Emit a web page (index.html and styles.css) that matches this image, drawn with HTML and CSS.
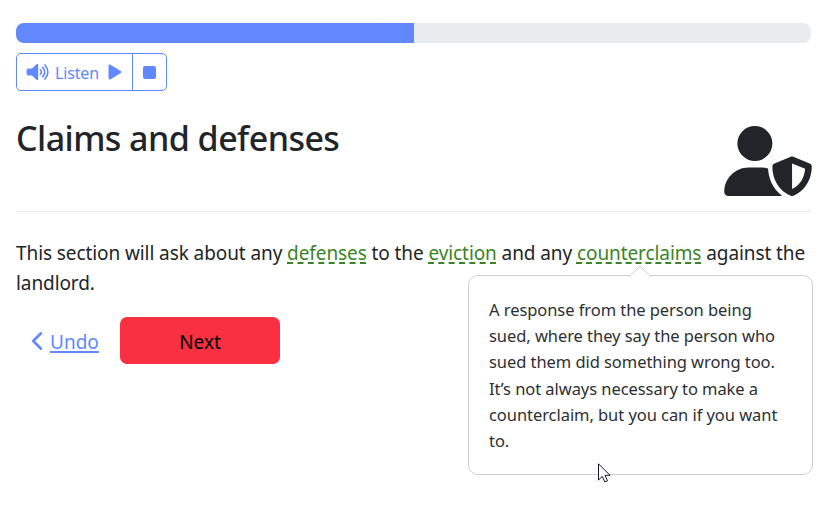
FILE: index.html
```html
<!DOCTYPE html>
<html lang="en">
<head>
<meta charset="utf-8">
<title>Claims and defenses</title>
<link rel="stylesheet" href="styles.css">
</head>
<body>
<main class="page">
  <div class="progress"><div class="progress-bar" style="width:50%"></div></div>
  <div class="audio">
    <button class="listen">
      <svg class="volume" viewBox="0 0 24 18"><path fill="currentColor" d="M12.200 2v14c0 1-1 1.300-1.700.7L6 12.600H2.600A2 2 0 0 1 .6 10.600V7.400a2 2 0 0 1 2-2H6L10.500 1.300c.7-.6 1.700-.3 1.700.7z"/><path fill="none" stroke="currentColor" stroke-width="1.600" stroke-linecap="round" d="M14.300 6.800q2.200 2.200 0 4.400M16.600 4.400q4.200 4.600 0 9.200M18.900 2q6 7 0 14"/></svg>
      <span class="listen-label">Listen</span>
      <svg class="play" viewBox="0 0 14 16"><path fill="currentColor" d="M.5 2v12c0 1.300 1.100 1.900 2.200 1.200l10-6.200c1-.6 1-1.500 0-2.100l-10-6C1.600.2.5.8.5 2z"/></svg>
    </button>
    <button class="stop" aria-label="Stop"><span class="square"></span></button>
  </div>
  <header class="heading">
    <h1>Claims and defenses</h1>
    <svg class="shield" viewBox="0 0 640 512"><path fill="currentColor" d="M224 256A128 128 0 1 0 224 0a128 128 0 1 0 0 256zm-45.700 48C79.800 304 0 383.800 0 482.300C0 498.700 13.300 512 29.700 512H418.300c1.800 0 3.500-.2 5.300-.5c-76.300-55.100-99.800-141-103.100-200.200c-16.100-4.800-33.100-7.300-50.700-7.300H178.300zm308.800-78.300l-120 48C358 277.400 352 286.200 352 296c0 63.300 25.900 168.800 134.800 214.200c5.900 2.500 12.600 2.500 18.500 0C614.100 464.800 640 359.300 640 296c0-9.800-6-18.600-15.100-22.300l-120-48c-5.700-2.300-12.100-2.300-17.800 0zM591.400 312c-3.900 50.700-27.200 116.700-95.400 149.700V273.800L591.400 312z"/></svg>
  </header>
  <p class="question">This section will ask about any <a class="term">defenses</a> to the <a class="term">eviction</a> and any <a class="term">counterclaims</a> against the landlord.</p>
  <div class="actions">
    <a class="undo"><svg class="chevron" viewBox="0 0 12 20"><path fill="none" stroke="currentColor" stroke-width="2.600" stroke-linecap="round" stroke-linejoin="round" d="M10 2.300L2.200 10L10 17.700"/></svg><span class="undo-label">Undo</span></a>
    <button class="next">Next</button>
  </div>
</main>
<div class="popover" role="tooltip">A response from the person being sued, where they say the person who sued them did something wrong too. It’s not always necessary to make a counterclaim, but you can if you want to.<svg class="arrow" viewBox="0 0 22 12"><path fill="#fff" d="M0 12L11 1L22 12z"/><path fill="none" stroke="#d0d0d0" d="M.5 11.500L11 1L21.500 11.500"/></svg></div>
<svg class="cursor" viewBox="0 0 13 20"><path fill="#fff" stroke="#15152a" d="M.5.8V17L4.300 13.400L6.800 19L9.500 17.800L7 12.300H12z"/></svg>
</body>
</html>
```
FILE: styles.css
```css
* { box-sizing: border-box; }
body { position: relative; margin: 0; min-height: 519px; background: #fff; color: #212529; font-family: "Noto Sans", "Open Sans", sans-serif; }
button { font-family: inherit; margin: 0; }
.page { width: 811px; padding: 23px 0 0 16px; }
.progress { height: 20px; border-radius: 8px; background: #e9ecef; overflow: hidden; }
.progress-bar { height: 100%; background: #6188ff; }
.audio { display: inline-flex; margin-top: 10px; height: 38px; border: 1px solid #6188ff; border-radius: 5px; color: #6188ff; vertical-align: top; }
.listen { display: flex; align-items: center; width: 116px; padding: 0 0 0 9px; border: 0; border-right: 1px solid #6188ff; background: none; color: inherit; font-size: 16px; }
.volume { width: 24px; height: 18px; }
.listen-label { width: 45px; margin-left: 5px; padding-top: 1px; letter-spacing: -.15px; white-space: nowrap; text-align: left; }
.play { width: 14px; height: 16px; margin-left: 8px; }
.stop { display: flex; align-items: center; justify-content: center; width: 33px; padding: 0; border: 0; background: none; color: inherit; }
.square { width: 13px; height: 13px; border-radius: 2px; background: currentColor; }
.heading { display: flex; justify-content: space-between; height: 121px; padding-top: 35px; border-bottom: 1px solid #e9eaeb; }
h1 { margin: -11px 0 0; font-size: 34px; font-weight: 500; line-height: 46px; letter-spacing: -.55px; white-space: nowrap; }
.shield { width: 88px; height: 70px; margin-right: -1px; }
.question { margin: 26px -6px 0 0; font-size: 19px; line-height: 30px; letter-spacing: -.09px; }
.term { color: #3a8427; text-decoration: underline dashed 2px; text-underline-offset: 2px; }
.popover { position: absolute; top: 275px; left: 468px; width: 345px; height: 200px; padding: 21px 19px 21px 20px; border: 1px solid #cfd0d1; border-radius: 10px; background: #fff; color: #2c3034; font-size: 16.500px; line-height: 26.200px; letter-spacing: -.06px; }
.arrow { position: absolute; top: -11px; left: 160px; width: 22px; height: 12px; }
.actions { display: flex; margin-top: 19px; font-size: 19px; }
.undo { display: flex; align-items: center; width: 104px; padding-left: 15px; color: #6188ff; }
.chevron { width: 12px; height: 20px; margin-right: 7px; }
.undo-label { padding-top: 2px; text-decoration: underline 2px; text-underline-offset: 2px; }
.next { width: 160px; height: 47px; padding: 2px 0 0; border: 0; border-radius: 7px; background: #f92f42; color: #000; font-size: 19px; }
.cursor { position: absolute; left: 598px; top: 463px; width: 13px; height: 20px; }
```
